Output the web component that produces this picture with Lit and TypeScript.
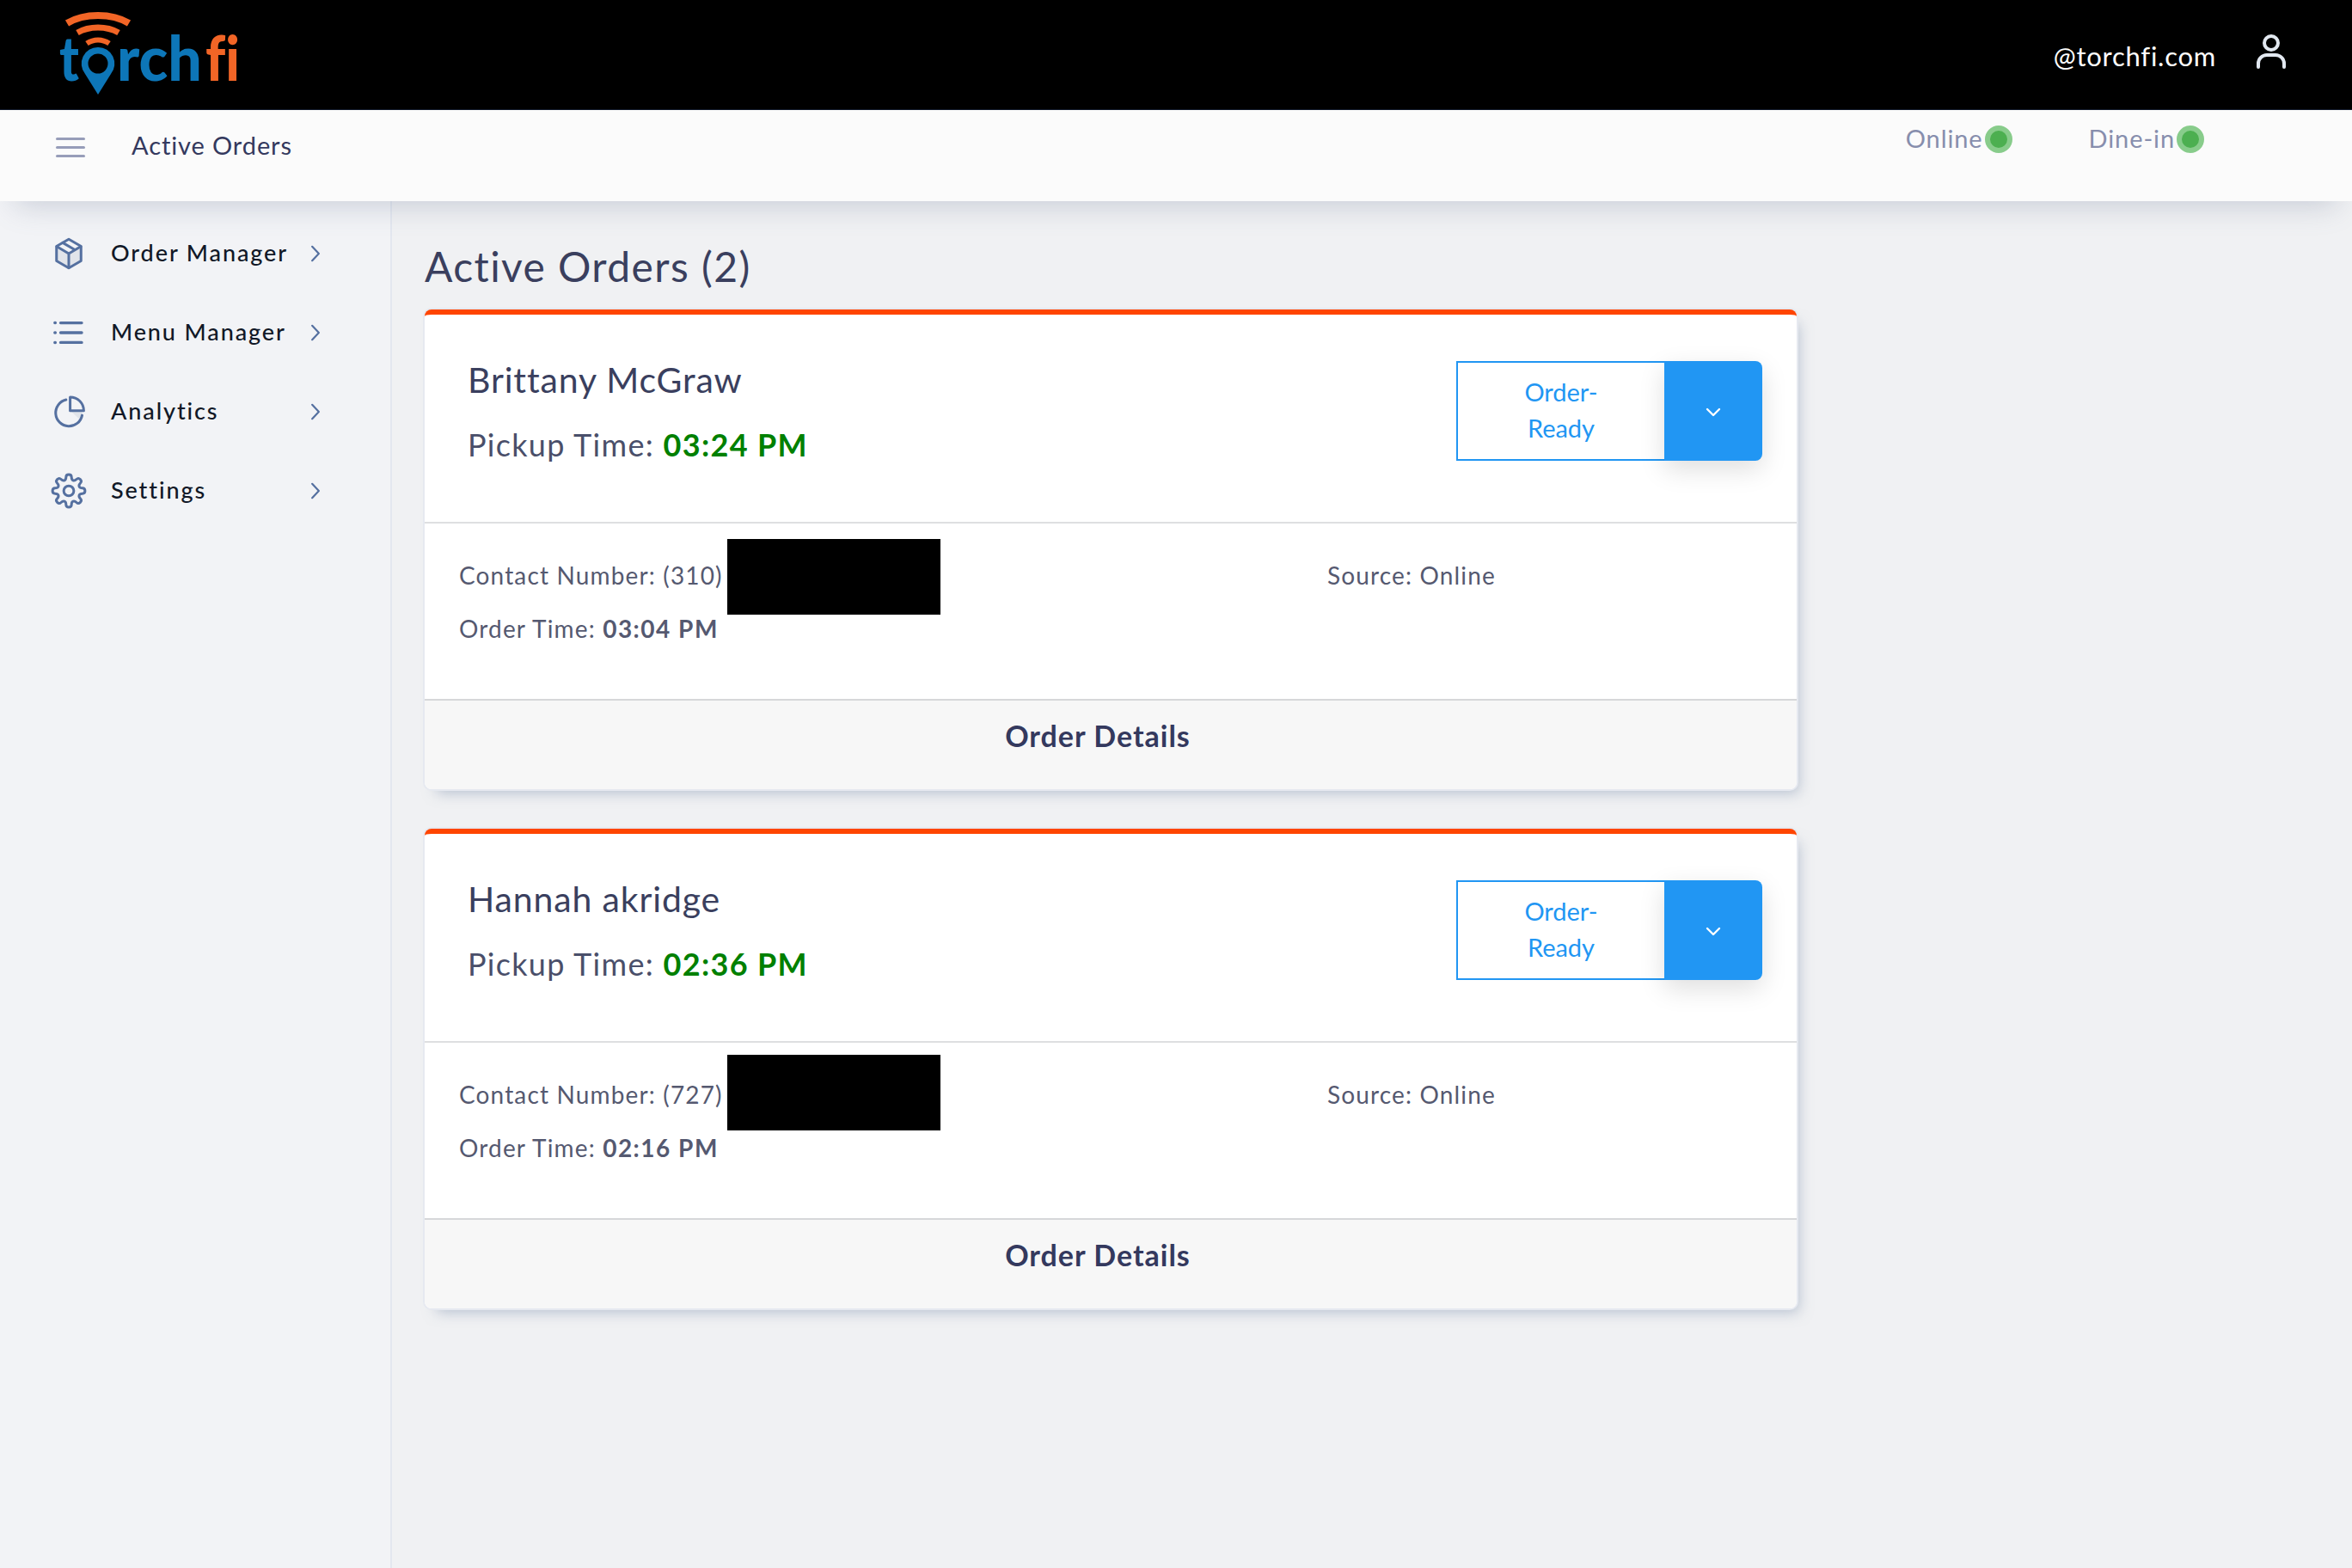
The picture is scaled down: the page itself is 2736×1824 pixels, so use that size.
import { LitElement, html, css, svg } from "lit";
import { customElement } from "lit/decorators.js";

/* Eight-toothed outline, smoothed through segment midpoints with quadratic curves. */
function gearPath(): string {
  const pts: [number, number][] = [];
  const teeth = 8;
  for (let i = 0; i < teeth; i++) {
    const a = (i * Math.PI * 2) / teeth - Math.PI / 2;
    const w = Math.PI / teeth;
    const add = (ang: number, r: number) => pts.push([12 + r * Math.cos(ang), 12 + r * Math.sin(ang)]);
    add(a - w * 0.42, 12.1);
    add(a + w * 0.42, 12.1);
    add(a + w * 0.62, 8.4);
    add(a + w * 1.38, 8.4);
  }
  const mid = (p: [number, number], q: [number, number]) => [(p[0] + q[0]) / 2, (p[1] + q[1]) / 2];
  const start = mid(pts[pts.length - 1], pts[0]);
  let d = `M${start[0].toFixed(2)} ${start[1].toFixed(2)}`;
  pts.forEach((p, i) => {
    const m = mid(p, pts[(i + 1) % pts.length]);
    d += `Q${p[0].toFixed(2)} ${p[1].toFixed(2)} ${m[0].toFixed(2)} ${m[1].toFixed(2)}`;
  });
  return d + "Z";
}

const ICONS: Record<string, unknown> = {
  box: svg`<path class="duo" d="M12 12 3.4 7v10l8.600 4.800L20.600 17V7z"/><path d="M12 1.400 21 6.600v10.800L12 22.600 3 17.400V6.600z"/><path d="M3.200 6.800 12 12l8.800-5.200M12 12v10.400M7.600 4l8.800 5.200"/>`,
  list: svg`<path d="M6 4.800h15.500M6 12h15.500M6 19.200h15.500" stroke-width="2.100"/><path d="M1.800 4.800h.3M1.800 12h.3M1.800 19.200h.3" stroke-width="2.200"/>`,
  pie: svg`<path class="duo" d="M13 11h9a9 9 0 0 1-2.600 6z"/><path d="M10 3.200A9.800 9.800 0 1 0 21.800 14.600"/><path d="M13 1.200a10 10 0 0 1 10 10H13z"/>`,
  gear: svg`<circle cx="12" cy="12" r="3.700"/><path d="${gearPath()}"/>`,
};

interface Order { name: string; pickup: string; area: string; placed: string; redactTop: number }

const ORDERS: Order[] = [
  { name: "Brittany McGraw", pickup: "03:24 PM", area: "(310)", placed: "03:04 PM", redactTop: 18 },
  { name: "Hannah akridge", pickup: "02:36 PM", area: "(727)", placed: "02:16 PM", redactTop: 14 },
];

const NAV = [
  { icon: "box", label: "Order Manager" },
  { icon: "list", label: "Menu Manager" },
  { icon: "pie", label: "Analytics" },
  { icon: "gear", label: "Settings" },
];

@customElement("app-root")
export class AppRoot extends LitElement {
  static styles = css`
    :host { display: block; width: 2736px; height: 1824px; overflow: hidden; background: #f0f1f3; font-family: Lato, "Noto Sans", sans-serif; color: #34395e; }
    .top { height: 128px; background: #000; border-bottom: 1px solid #111a2b; box-sizing: border-box; display: flex; align-items: center; justify-content: space-between; padding: 0 76px 0 60px; }
    .logo { display: block; width: 240px; height: 120px; margin-top: 2px; }
    .logo text { font-family: Lato, sans-serif; font-weight: 900; font-size: 72px; font-variant-ligatures: none; }
    .t-blue { fill: #0d76b8; }
    .t-orange { fill: #f26526; }
    .account { display: flex; align-items: center; gap: 46px; color: #fff; font-size: 31px; }
    .email { letter-spacing: .75px; margin-top: 2px; }
    .user { width: 36px; height: 40px; fill: none; stroke: #e2e8f0; stroke-width: 4; stroke-linecap: round; margin-top: -7px; }
    .sub { position: relative; z-index: 2; height: 106px; background: #fbfbfb; display: flex; box-shadow: 0 22px 34px -18px rgba(110,120,150,.32); }
    .burger { width: 34px; margin: 32px 0 0 65px; height: 23px; display: flex; flex-direction: column; justify-content: space-between; }
    .burger i { display: block; height: 3px; border-radius: 2px; background: #979db9; }
    .crumb { margin: 21px 0 0 54px; font-size: 29px; line-height: 40px; letter-spacing: .9px; color: #34395e; }
    .statuses { margin-left: auto; display: flex; gap: 89px; padding: 13px 172px 0 0; }
    .status { display: flex; align-items: flex-start; gap: 2px; font-size: 29px; line-height: 40px; letter-spacing: .9px; color: #878ead; }
    .dot { width: 20px; height: 20px; margin-top: 5px; border-radius: 50%; background: #4caf50; border: 6px solid #88cc8b; }
    .layout { display: flex; height: 1590px; }
    .side { width: 456px; box-sizing: border-box; background: #f2f3f6; border-right: 2px solid #e3e7ef; padding: 15px 0 0 61px; }
    .item { height: 92px; display: flex; align-items: center; }
    .icon { width: 38px; height: 38px; fill: none; stroke: #5570a0; stroke-width: 1.900; stroke-linecap: round; stroke-linejoin: round; flex: none; overflow: visible; }
    .icon .duo { fill: #e1e4ea; stroke: none; }
    .label { width: 232px; margin: -3px 0 0 30px; font-size: 27px; letter-spacing: 1.900px; color: #111827; font-weight: 500; }
    .chev { width: 12px; height: 22px; fill: none; stroke: #5570a0; stroke-width: 2.600; stroke-linecap: round; stroke-linejoin: round; }
    .main { flex: 1; padding: 0 0 0 38px; }
    h1 { margin: 0; height: 126px; box-sizing: border-box; padding-top: 46px; font-size: 48px; line-height: 60px; font-weight: 400; letter-spacing: 1.400px; color: #3a3f5e; }
    .card { position: relative; width: 1596px; height: 558px; margin-bottom: 46px; box-sizing: border-box; display: flex; flex-direction: column; background: #fff; border-top: 6px solid #ff4500; border-radius: 8px; box-shadow: 0 0 0 2px #e6e9f0, 8px 10px 16px -6px rgba(120,140,170,.5); }
    .head { height: 243px; box-sizing: border-box; border-bottom: 2px solid #dedfe1; display: flex; justify-content: space-between; padding: 54px 40px 0 50px; }
    .name { font-size: 41px; line-height: 44px; letter-spacing: .85px; color: #3a3f5e; }
    .pickup { margin-top: 31px; font-size: 36px; line-height: 44px; letter-spacing: 1.300px; color: #4a4f6a; }
    .pickup b { color: #008000; font-weight: 700; }
    .action { display: flex; width: 356px; height: 116px; box-sizing: border-box; border-radius: 0 8px 8px 0; }
    .state { flex: 1; box-sizing: border-box; border: 2px solid #2196f3; border-right: 0; display: flex; align-items: center; justify-content: center; text-align: center; color: #2196f3; font-size: 29px; line-height: 42px; padding-bottom: 2px; }
    .drop { width: 114px; background: #2196f3; border-radius: 0 8px 8px 0; display: flex; align-items: center; justify-content: center; box-shadow: 0 10px 30px rgba(0,0,0,.13); }
    .drop svg { width: 18px; height: 12px; fill: none; stroke: #fff; stroke-width: 2.400; stroke-linecap: round; stroke-linejoin: round; margin-top: 4px; }
    .body { position: relative; flex: 1; display: grid; grid-template-columns: 1010px 1fr; padding: 40px 0 0 40px; font-size: 28px; line-height: 40px; letter-spacing: 1.150px; color: #555970; }
    .body p { margin: 0 0 22px; }
    .body b { font-weight: 700; letter-spacing: 1.500px; }
    .redact { position: absolute; left: 352px; width: 248px; height: 88px; background: #000; }
    .foot { height: 105px; box-sizing: border-box; border-top: 2px solid #d6d7d9; background: #f7f7f7; border-radius: 0 0 8px 8px; display: flex; justify-content: center; padding: 19px 30px 0 0; font-size: 34px; line-height: 44px; font-weight: 700; letter-spacing: 1px; color: #34395e; }
  `;

  private card(o: Order) {
    return html`<section class="card">
      <div class="head">
        <div>
          <div class="name">${o.name}</div>
          <div class="pickup">Pickup Time: <b>${o.pickup}</b></div>
        </div>
        <div class="action">
          <div class="state">Order-<br />Ready</div>
          <div class="drop"><svg viewBox="0 0 18 12"><path d="M2 2l7 7 7-7" /></svg></div>
        </div>
      </div>
      <div class="body">
        <div>
          <p>Contact Number: ${o.area}</p>
          <p>Order Time: <b>${o.placed}</b></p>
        </div>
        <div>Source: Online</div>
        <div class="redact" style="top:${o.redactTop}px"></div>
      </div>
      <div class="foot">Order Details</div>
    </section>`;
  }

  render() {
    return html`
      <header class="top">
        <svg class="logo" viewBox="0 0 240 120">
          <path d="M18 22C38 10 70 10 90 22" fill="none" stroke="#f26526" stroke-width="8" />
          <path d="M30 33C44 25 64 25 78 33" fill="none" stroke="#f26526" stroke-width="7" />
          <path d="M41 45.500C49 40 59 40 67 45.500" fill="none" stroke="#f26526" stroke-width="6" />
          <text class="t-blue" x="9" y="89" textLength="23" lengthAdjust="spacingAndGlyphs">t</text>
          <path d="M54 50a19 19 0 0 1 15 31L54 105 39 81a19 19 0 0 1 15-31zm0 7.500a11.500 11.500 0 1 0 0 23 11.500 11.500 0 0 0 0-23z" fill="#0d76b8" fill-rule="evenodd" />
          <text class="t-blue" x="76" y="89" textLength="99" lengthAdjust="spacingAndGlyphs">rch</text>
          <text class="t-orange" x="179" y="89" textLength="40" lengthAdjust="spacingAndGlyphs">fi</text>
        </svg>
        <div class="account">
          <span class="email">@torchfi.com</span>
          <svg class="user" viewBox="0 0 36 40"><circle cx="18" cy="10" r="8" /><path d="M3 38v-4a10 10 0 0 1 10-10h10a10 10 0 0 1 10 10v4" /></svg>
        </div>
      </header>
      <div class="sub">
        <div class="burger"><i></i><i></i><i></i></div>
        <div class="crumb">Active Orders</div>
        <div class="statuses">
          <div class="status">Online<span class="dot"></span></div>
          <div class="status">Dine-in<span class="dot"></span></div>
        </div>
      </div>
      <div class="layout">
        <nav class="side">
          ${NAV.map(
            (n) => html`<div class="item">
              <svg class="icon" viewBox="0 0 24 24">${ICONS[n.icon]}</svg>
              <span class="label">${n.label}</span>
              <svg class="chev" viewBox="0 0 14 24"><path d="M2.500 2.500 11.500 12l-9 9.500" /></svg>
            </div>`,
          )}
        </nav>
        <main class="main">
          <h1>Active Orders (2)</h1>
          ${ORDERS.map((o) => this.card(o))}
        </main>
      </div>
    `;
  }
}
